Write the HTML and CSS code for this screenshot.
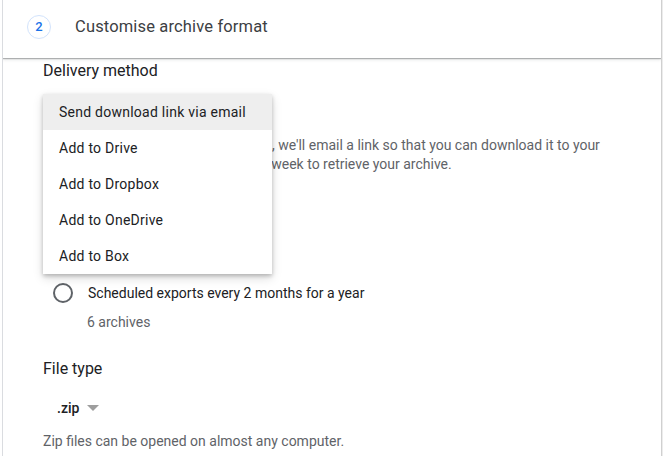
FILE: index.html
```html
<!DOCTYPE html>
<html>
<head>
<meta charset="utf-8">
<link rel="stylesheet" href="styles.css">
</head>
<body>
<div class="panel">
  <div class="step-header">
    <span class="step-num">2</span>
    <span class="step-title">Customise archive format</span>
  </div>
  <div class="content">
    <h3 class="section-title first">Delivery method</h3>
    <div class="delivery">
      <div class="select-value covered">Send download link via email</div>
      <p class="desc"><span class="covered">When the files are ready to download</span>, we'll email a link so that you can download it to your <span class="covered">device. You will then have about one</span> week to retrieve your archive.</p>
      <div class="menu">
        <div class="menu-item active">Send download link via email</div>
        <div class="menu-item">Add to Drive</div>
        <div class="menu-item">Add to Dropbox</div>
        <div class="menu-item">Add to OneDrive</div>
        <div class="menu-item">Add to Box</div>
      </div>
    </div>
    <h3 class="section-title freq covered">Frequency</h3>
    <div class="radio-row covered"><span class="radio"></span><span class="radio-label">Export once</span></div>
    <div class="radio-row"><span class="radio"></span><span class="radio-label">Scheduled exports every 2 months for a year</span></div>
    <div class="radio-sub">6 archives</div>
    <h3 class="section-title filetype">File type</h3>
    <div class="file-select"><span class="file-value">.zip</span><span class="caret"></span></div>
    <p class="hint">Zip files can be opened on almost any computer.</p>
  </div>
</div>
</body>
</html>
```

FILE: styles.css
```css
html, body {
  margin: 0;
  padding: 0;
  background: #ffffff;
  font-family: Roboto, "Liberation Sans", sans-serif;
  color: #202124;
}

.panel {
  margin-left: 2px;
  width: 658px;
  height: 456px;
  border-left: 1px solid #dadce0;
  border-right: 1px solid #d0d0d0;
  box-shadow: 1px 0 0 #ececec;
  overflow: hidden;
}

.covered {
  visibility: hidden;
}

.step-header {
  height: 58px;
  display: flex;
  align-items: center;
  padding-left: 24px;
  background: #fff;
  box-shadow: 0 1px 1px rgba(60, 64, 67, 0.35), 0 2px 3px rgba(60, 64, 67, 0.12), 0 -1px 2px rgba(60,64,67,0.08);
  position: relative;
  z-index: 1;
}

.step-num {
  width: 22px;
  height: 22px;
  border: 1px solid #d2e3fc;
  border-radius: 50%;
  display: flex;
  align-items: center;
  justify-content: center;
  color: #1a73e8;
  font-size: 13px;
  font-weight: 500;
  margin-top: -5px;
}

.step-title {
  margin-left: 24px;
  font-size: 16.5px;
  color: #3c4043;
  margin-top: -6px;
  letter-spacing: 0.15px;
}

.content {
  padding-left: 40px;
}

.section-title {
  margin: 0;
  font-size: 16px;
  font-weight: 400;
  color: #202124;
  line-height: 24px;
}

.section-title.first {
  padding-top: 1px;
}

.delivery {
  position: relative;
  margin-top: 11px;
  padding-top: 4px;
}

.select-value {
  height: 36px;
  line-height: 36px;
  font-size: 14px;
  padding-left: 16px;
}

.desc {
  margin: 0;
  font-size: 14px;
  line-height: 19px;
  color: #5f6368;
  width: 570px;
  padding-top: 2px;
}

.menu {
  position: absolute;
  left: 0;
  top: 0;
  width: 229px;
  background: #fff;
  box-shadow: 0 2px 4px rgba(0,0,0,0.22), 0 4px 10px rgba(0,0,0,0.14);
  z-index: 2;
}

.menu-item {
  height: 36px;
  line-height: 36px;
  padding-left: 16px;
  font-size: 14px;
  color: #202124;
  letter-spacing: 0.25px;
}

.menu-item.active {
  background: #eeeeee;
}

.freq {
  margin-top: 41px;
}

.radio-row {
  display: flex;
  align-items: center;
  height: 36px;
  padding-left: 10px;
}

.radio {
  width: 16px;
  height: 16px;
  border: 2px solid #5f6368;
  border-radius: 50%;
  flex: none;
}

.radio-label {
  margin-left: 15px;
  font-size: 14px;
  color: #202124;
}

.radio-sub {
  padding-left: 44px;
  font-size: 14px;
  color: #5f6368;
  line-height: 20px;
  margin-top: 1px;
}

.filetype {
  margin-top: 25px;
}

.file-select {
  display: flex;
  align-items: center;
  height: 36px;
  margin-top: 9px;
  padding-left: 14px;
}

.file-value {
  font-size: 14px;
  font-weight: 500;
  color: #202124;
}

.caret {
  width: 0;
  height: 0;
  border-left: 6px solid transparent;
  border-right: 6px solid transparent;
  border-top: 6px solid #9e9e9e;
  margin-left: 8px;
}

.hint {
  margin: 5px 0 0;
  font-size: 14px;
  color: #5f6368;
  line-height: 20px;
}
```
